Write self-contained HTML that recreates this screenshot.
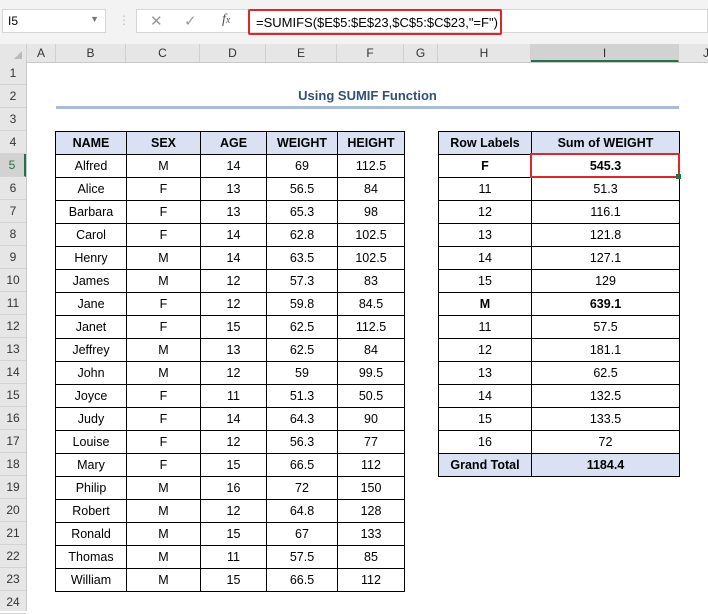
<!DOCTYPE html>
<html><head><meta charset="utf-8"><style>
*{margin:0;padding:0;box-sizing:border-box}
body{width:708px;height:611px;background:#fff;font-family:"Liberation Sans",Arial,sans-serif;font-size:12px;color:#000;position:relative;overflow:hidden}
.a{position:absolute}
.top{left:0;top:0;width:708px;height:44px;background:#f3f3f3}
.nb{left:2px;top:9px;width:104px;height:24px;background:#fff;border:1px solid #d6d6d6;padding:4px 5px;font-size:12px}
.fb{left:136px;top:9px;width:572px;height:24px;background:#fff;border:1px solid #d6d6d6}
.fx{left:248px;top:9px;width:254px;height:26px;border:2px solid #e0262b;border-radius:2px;padding:4px 6px;font-size:13px;white-space:nowrap}
.ch{top:44px;height:19px;background:#e6e6e6;border-bottom:1px solid #c8c8c8;left:0;width:708px}
.cl{top:44px;height:18px;text-align:center;line-height:18px;border-right:1px solid #d0d0d0;color:#333;font-size:12px}
.rh{left:0;width:27px;background:#e6e6e6;border-right:1px solid #c8c8c8;top:62px;height:549px}
.rn{left:0;width:26px;height:23px;line-height:23px;text-align:center;color:#333;border-bottom:1px solid #d4d4d4;font-size:12px}
table{position:absolute;border-collapse:collapse;table-layout:fixed}
td{border:1px solid #000;height:23px;text-align:center;padding:0;font-size:12.5px;white-space:nowrap}
.h td{background:#d9e1f2;font-weight:bold}
.b{font-weight:bold}
</style></head><body>
<div class="a top"></div>
<div class="a nb">I5<span style="position:absolute;right:6px;top:4px;color:#777;font-size:9px">▼</span></div>
<div class="a" style="left:118px;top:13px;color:#bbb">⋮</div>
<div class="a fb"></div>
<div class="a" style="left:150px;top:12px;color:#999;font-size:15px">✕</div>
<div class="a" style="left:184px;top:12px;color:#999;font-size:15px">✓</div>
<div class="a" style="left:222px;top:12px;color:#555;font-style:italic;font-family:'Liberation Serif',serif;font-size:14px">f<span style="font-size:10px">x</span></div>
<div class="a fx">=SUMIFS($E$5:$E$23,$C$5:$C$23,"=F")</div>
<div class="a ch"></div>
<div class="a" style="left:0;top:44px;width:27px;height:18px;border-right:1px solid #d0d0d0"><span style="position:absolute;right:4px;bottom:3px;width:0;height:0;border-left:8px solid transparent;border-bottom:8px solid #bbb"></span></div>
<div class="a cl" style="left:27px;width:29px">A</div>
<div class="a cl" style="left:56px;width:70px">B</div>
<div class="a cl" style="left:126px;width:74px">C</div>
<div class="a cl" style="left:200px;width:66px">D</div>
<div class="a cl" style="left:266px;width:71px">E</div>
<div class="a cl" style="left:337px;width:67px">F</div>
<div class="a cl" style="left:404px;width:34px">G</div>
<div class="a cl" style="left:438px;width:93px">H</div>
<div class="a cl" style="left:531px;width:148px;background:#d2d2d2;border-bottom:2px solid #217346">I</div>
<div class="a cl" style="left:679px;width:40px;text-align:left;padding-left:24px">J</div>
<div class="a rh">
<div class="a rn" style="top:0">1</div><div class="a rn" style="top:23px">2</div><div class="a rn" style="top:46px">3</div><div class="a rn" style="top:69px">4</div>
<div class="a rn" style="top:92px;background:#d2d2d2;color:#217346;border-right:2px solid #217346">5</div>
<div class="a rn" style="top:115px">6</div><div class="a rn" style="top:138px">7</div><div class="a rn" style="top:161px">8</div><div class="a rn" style="top:184px">9</div><div class="a rn" style="top:207px">10</div><div class="a rn" style="top:230px">11</div><div class="a rn" style="top:253px">12</div><div class="a rn" style="top:276px">13</div><div class="a rn" style="top:299px">14</div><div class="a rn" style="top:322px">15</div><div class="a rn" style="top:345px">16</div><div class="a rn" style="top:368px">17</div><div class="a rn" style="top:391px">18</div><div class="a rn" style="top:414px">19</div><div class="a rn" style="top:437px">20</div><div class="a rn" style="top:460px">21</div><div class="a rn" style="top:483px">22</div><div class="a rn" style="top:506px">23</div><div class="a rn" style="top:529px">24</div>
</div>
<div class="a" style="left:56px;top:88px;width:623px;text-align:center;font-weight:bold;font-size:13px;color:#2f4f7f">Using SUMIF Function</div>
<div class="a" style="left:56px;top:106px;width:623px;height:3px;background:#a9bcd8"></div>

<table style="left:55px;top:131px;width:349px">
<colgroup><col style="width:71px"><col style="width:74px"><col style="width:66px"><col style="width:71px"><col style="width:67px"></colgroup>
<tr class="h"><td>NAME</td><td>SEX</td><td>AGE</td><td>WEIGHT</td><td>HEIGHT</td></tr>
<tr><td>Alfred</td><td>M</td><td>14</td><td>69</td><td>112.5</td></tr>
<tr><td>Alice</td><td>F</td><td>13</td><td>56.5</td><td>84</td></tr>
<tr><td>Barbara</td><td>F</td><td>13</td><td>65.3</td><td>98</td></tr>
<tr><td>Carol</td><td>F</td><td>14</td><td>62.8</td><td>102.5</td></tr>
<tr><td>Henry</td><td>M</td><td>14</td><td>63.5</td><td>102.5</td></tr>
<tr><td>James</td><td>M</td><td>12</td><td>57.3</td><td>83</td></tr>
<tr><td>Jane</td><td>F</td><td>12</td><td>59.8</td><td>84.5</td></tr>
<tr><td>Janet</td><td>F</td><td>15</td><td>62.5</td><td>112.5</td></tr>
<tr><td>Jeffrey</td><td>M</td><td>13</td><td>62.5</td><td>84</td></tr>
<tr><td>John</td><td>M</td><td>12</td><td>59</td><td>99.5</td></tr>
<tr><td>Joyce</td><td>F</td><td>11</td><td>51.3</td><td>50.5</td></tr>
<tr><td>Judy</td><td>F</td><td>14</td><td>64.3</td><td>90</td></tr>
<tr><td>Louise</td><td>F</td><td>12</td><td>56.3</td><td>77</td></tr>
<tr><td>Mary</td><td>F</td><td>15</td><td>66.5</td><td>112</td></tr>
<tr><td>Philip</td><td>M</td><td>16</td><td>72</td><td>150</td></tr>
<tr><td>Robert</td><td>M</td><td>12</td><td>64.8</td><td>128</td></tr>
<tr><td>Ronald</td><td>M</td><td>15</td><td>67</td><td>133</td></tr>
<tr><td>Thomas</td><td>M</td><td>11</td><td>57.5</td><td>85</td></tr>
<tr><td>William</td><td>M</td><td>15</td><td>66.5</td><td>112</td></tr>
</table>

<table style="left:438px;top:131px;width:241px">
<colgroup><col style="width:93px"><col style="width:148px"></colgroup>
<tr class="h"><td>Row Labels</td><td>Sum of WEIGHT</td></tr>
<tr class="b"><td>F</td><td>545.3</td></tr>
<tr><td>11</td><td>51.3</td></tr>
<tr><td>12</td><td>116.1</td></tr>
<tr><td>13</td><td>121.8</td></tr>
<tr><td>14</td><td>127.1</td></tr>
<tr><td>15</td><td>129</td></tr>
<tr class="b"><td>M</td><td>639.1</td></tr>
<tr><td>11</td><td>57.5</td></tr>
<tr><td>12</td><td>181.1</td></tr>
<tr><td>13</td><td>62.5</td></tr>
<tr><td>14</td><td>132.5</td></tr>
<tr><td>15</td><td>133.5</td></tr>
<tr><td>16</td><td>72</td></tr>
<tr class="h"><td>Grand Total</td><td>1184.4</td></tr>
</table>
<div class="a" style="left:530px;top:153px;width:150px;height:25px;border:2px solid #e0262b"></div>
<div class="a" style="left:676px;top:174px;width:5px;height:5px;background:#217346"></div>
</body></html>
